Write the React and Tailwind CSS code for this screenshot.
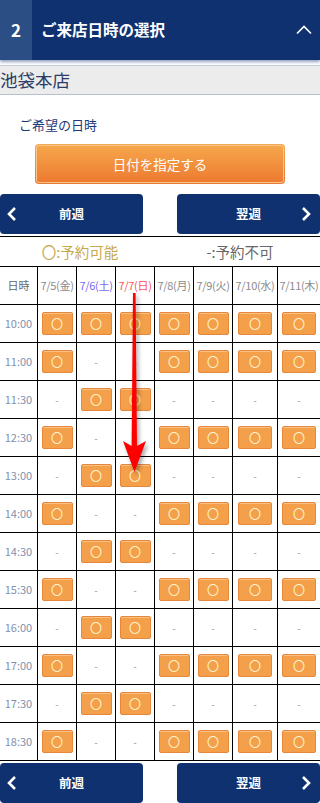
import React from 'react';

const font = { fontFamily: '"Noto Sans CJK JP", "Noto Sans", sans-serif' };

const dates = [
  { label: '7/5(金)', color: 'text-[#8a8a8a]', btn: 'w-[31px]' },
  { label: '7/6(土)', color: 'text-[#7a68f0]', btn: 'w-[31px]' },
  { label: '7/7(日)', color: 'text-[#ff5252]', btn: 'w-[31px]' },
  { label: '7/8(月)', color: 'text-[#8a8a8a]', btn: 'w-[31px]' },
  { label: '7/9(火)', color: 'text-[#8a8a8a]', btn: 'w-[31px]' },
  { label: '7/10(水)', color: 'text-[#8a8a8a]', btn: 'w-[34px]' },
  { label: '7/11(木)', color: 'text-[#8a8a8a]', btn: 'w-[34px]' },
];

const A = [1, 0, 0, 1, 1, 1, 1];
const B = [0, 1, 1, 0, 0, 0, 0];

const rows = [
  ['10:00', [1, 1, 1, 1, 1, 1, 1]],
  ['11:00', A],
  ['11:30', B],
  ['12:30', A],
  ['13:00', B],
  ['14:00', A],
  ['14:30', B],
  ['15:30', A],
  ['16:00', B],
  ['17:00', A],
  ['17:30', B],
  ['18:30', A],
];

const grid = 'grid grid-cols-[37px_39px_39px_39px_39px_39px_45px_43px]';

function WeekButtons() {
  return (
    <div className="flex justify-between">
      <button className="grid h-10 w-[143px] grid-cols-[24px_1fr_24px] items-center rounded-[4px] bg-[#0f3170] text-[12.5px] font-bold text-white">
        <svg width="24" height="20" viewBox="0 0 24 20">
          <polyline points="15,4 9,10 15,16" fill="none" stroke="white" strokeWidth="2.6" />
        </svg>
        <span>前週</span>
        <span />
      </button>
      <button className="grid h-10 w-[143px] grid-cols-[24px_1fr_24px] items-center rounded-[4px] bg-[#0f3170] text-[12.5px] font-bold text-white">
        <span />
        <span>翌週</span>
        <svg width="24" height="20" viewBox="0 0 24 20">
          <polyline points="7,4 13,10 7,16" fill="none" stroke="white" strokeWidth="2.6" />
        </svg>
      </button>
    </div>
  );
}

function Slot({ open, w }) {
  if (!open) return <span className="text-[10px] text-[#9a9a9a]">-</span>;
  return (
    <span
      className={`flex h-[23px] ${w} items-center justify-center rounded-[2px] border border-[#e6873a] bg-[#f4a04b] text-[12px] leading-none text-[#fff4cc] shadow-[inset_0_1px_0_rgba(255,255,255,0.35)]`}
    >
      〇
    </span>
  );
}

export default function App() {
  return (
    <div className="relative w-[320px] bg-white" style={font}>
      {/* step header */}
      <div className="flex h-[60px] items-center bg-[#0f3170] text-white shadow-[0_2px_3px_rgba(15,49,112,0.45)]">
        <div className="flex h-full w-8 items-center justify-center bg-[#2b4e85] text-[17px] font-bold">2</div>
        <div className="ml-[9px] flex-1 text-[15.5px] font-bold">ご来店日時の選択</div>
        <svg className="mr-[8px]" width="16" height="10" viewBox="0 0 16 10">
          <polyline points="1,8.5 8,1.5 15,8.5" fill="none" stroke="white" strokeWidth="1.6" />
        </svg>
      </div>

      {/* store */}
      <div className="mt-[5px] flex h-[30px] items-center border-y border-t-[#c9ced6] border-b-[#b5c0ce] bg-[#ececec] text-[17.5px] text-[#2d3c66]">
        池袋本店
      </div>

      <div className="pl-[19px] pt-5 text-[13px] leading-5 text-[#1c3a7a]">ご希望の日時</div>

      <div className="mt-[9px] flex justify-center">
        <button className="h-10 w-[250px] rounded-[4px] bg-gradient-to-b from-[#f6a84c] to-[#ec7830] p-px text-[13.5px] text-white">
          <span className="flex h-full w-full items-center justify-center rounded-[3px] border border-[#f8c58c]">日付を指定する</span>
        </button>
      </div>

      <div className="mt-[10px]">
        <WeekButtons />
      </div>

      {/* schedule table */}
      <div className="mt-[2px]">
        <div className="flex h-[31px] items-center border-y border-black text-[14.5px]">
          <span className="w-40 text-center text-[#c8a84b]">〇:予約可能</span>
          <span className="w-40 text-center text-[#666]">-:予約不可</span>
        </div>
        <div className={`${grid} h-[38px] border-b border-black text-[11px]`}>
          <div className="flex items-center justify-center text-[#666]">日時</div>
          {dates.map((d) => (
            <div key={d.label} className={`flex items-center justify-center whitespace-nowrap border-l border-black tracking-[-0.3px] ${d.color}`}>
              {d.label}
            </div>
          ))}
        </div>
        {rows.map(([time, slots]) => (
          <div key={time} className={`${grid} h-[38px] border-b border-black`}>
            <div className="flex items-center justify-center text-[11px] text-[#8291ae]">{time}</div>
            {slots.map((s, i) => (
              <div key={i} className="flex items-center justify-center border-l border-black">
                <Slot open={s} w={dates[i].btn} />
              </div>
            ))}
          </div>
        ))}
      </div>

      <div className="mt-[2px] pb-px">
        <WeekButtons />
      </div>

      {/* red pointer arrow */}
      <svg
        className="pointer-events-none absolute left-0 top-0 drop-shadow-[2px_3px_2px_rgba(0,0,0,0.35)]"
        width="320"
        height="803"
        viewBox="0 0 320 803"
      >
        <polygon points="133,293 135.6,293 137,446 131.6,446" fill="#ff0000" />
        <polygon points="123,441 131.6,446 137,446 146,441 134.5,472" fill="#ff0000" />
      </svg>
    </div>
  );
}
